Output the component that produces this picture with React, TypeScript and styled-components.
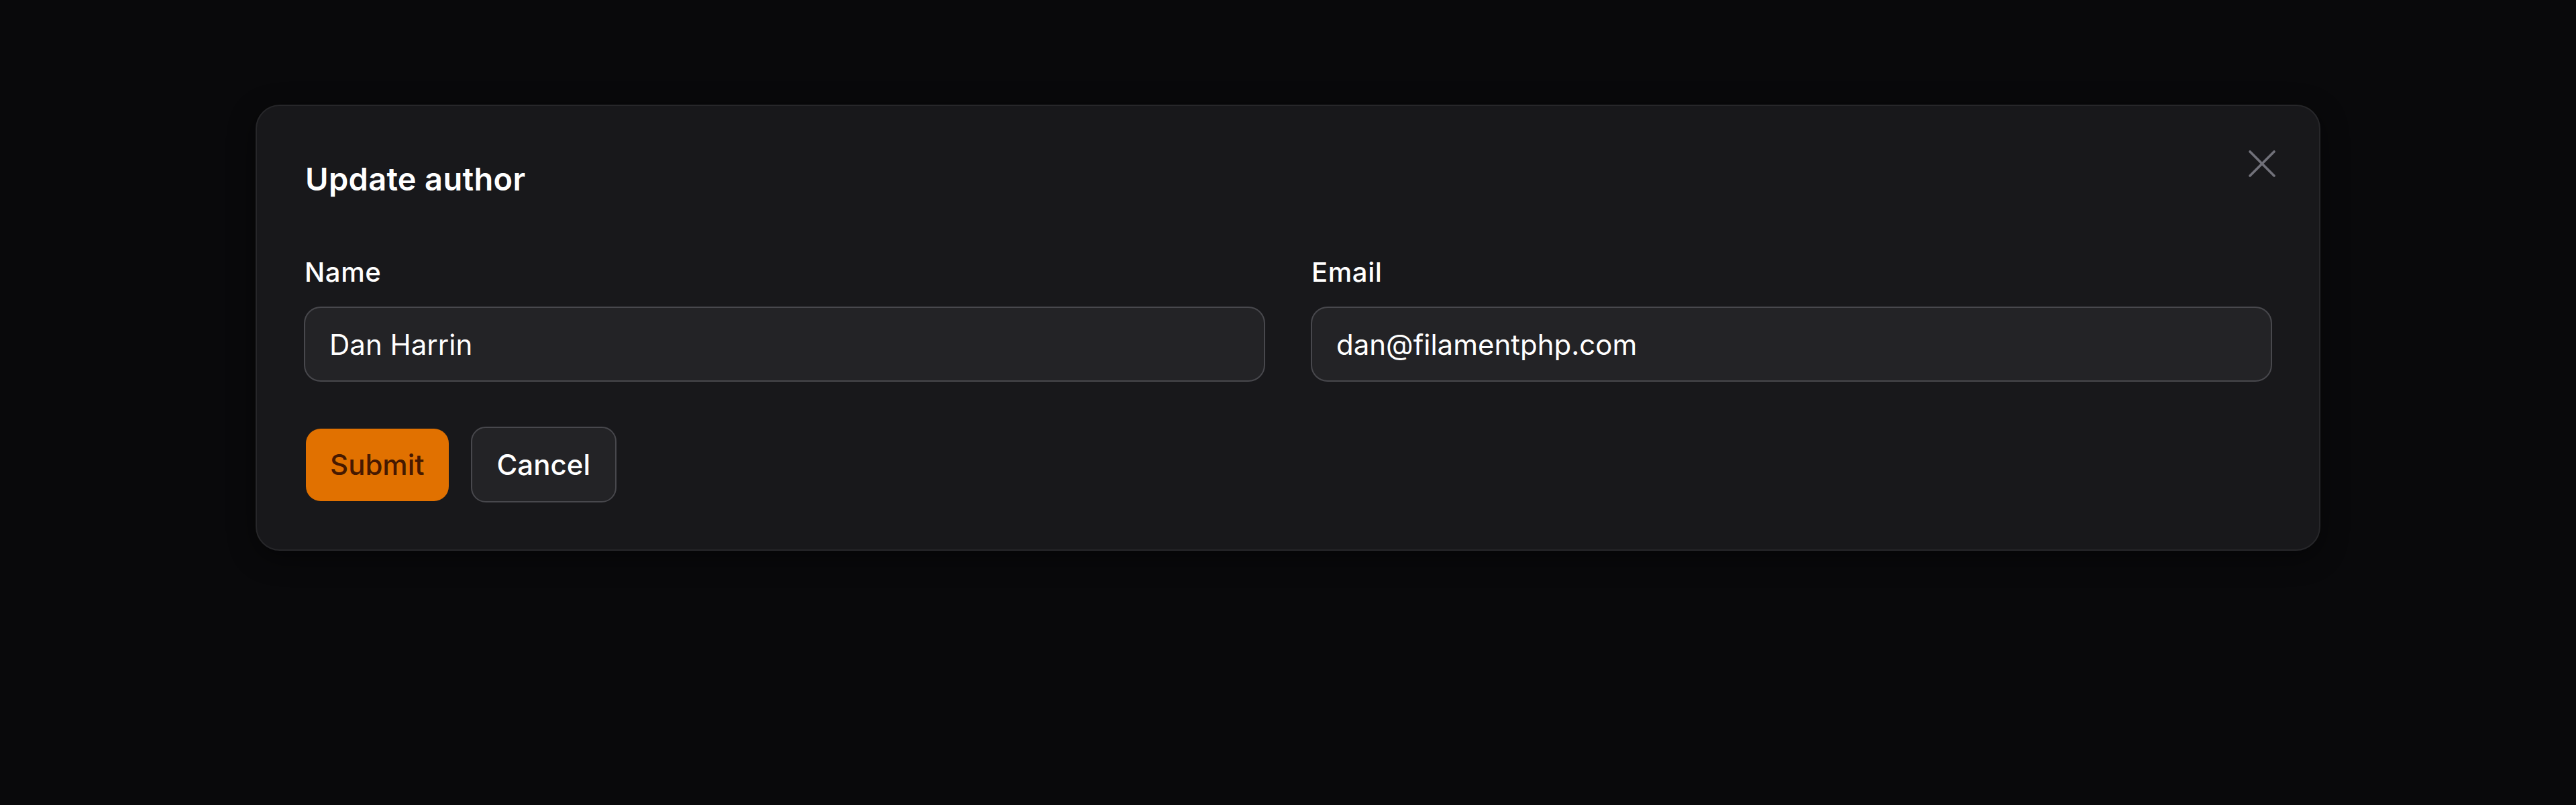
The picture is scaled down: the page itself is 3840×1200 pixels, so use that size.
import React, { useState } from 'react';
import styled, { createGlobalStyle } from 'styled-components';

const GlobalStyle = createGlobalStyle`
  html, body {
    margin: 0;
    padding: 0;
    background: #09090b;
    font-family: Inter, 'Noto Sans', 'Liberation Sans', sans-serif;
    -webkit-font-smoothing: antialiased;
  }
  * {
    box-sizing: border-box;
  }
`;

const App: React.FC = () => {
  const [name, setName] = useState('Dan Harrin');
  const [email, setEmail] = useState('dan@filamentphp.com');

  return (
    <>
      <GlobalStyle />
      <Page>
        <Modal>
          <Header>
            <Title>Update author</Title>
            <CloseButton type="button" aria-label="Close">
              <svg width="40" height="40" viewBox="0 0 40 40" fill="none">
                <path
                  d="M2 2 38 38M38 2 2 38"
                  stroke="#71717a"
                  strokeWidth="3.6"
                  strokeLinecap="round"
                />
              </svg>
            </CloseButton>
          </Header>

          <Fields>
            <Field>
              <Label htmlFor="name">Name</Label>
              <Input id="name" value={name} onChange={(e) => setName(e.target.value)} />
            </Field>
            <Field>
              <Label htmlFor="email">Email</Label>
              <Input id="email" value={email} onChange={(e) => setEmail(e.target.value)} />
            </Field>
          </Fields>

          <Footer>
            <Button type="submit" $variant="primary">Submit</Button>
            <Button type="button" $variant="secondary">Cancel</Button>
          </Footer>
        </Modal>
      </Page>
    </>
  );
};

export default App;

const Page = styled.div`
  min-height: 1200px;
  padding-top: 156px;
`;

const Modal = styled.div`
  width: 3078px;
  margin: 0 auto;
  padding: 72px 70px 70px;
  background: #18181b;
  border: 2px solid #27272a;
  border-radius: 36px;
  box-shadow: 0 10px 40px rgba(0, 0, 0, 0.45);
`;

const Header = styled.div`
  display: flex;
  justify-content: space-between;
  align-items: flex-start;
`;

const Title = styled.h2`
  margin: 0 0 0 2px;
  font-size: 47px;
  line-height: 74px;
  letter-spacing: 0.3px;
  font-weight: 600;
  color: #ffffff;
`;

const CloseButton = styled.button`
  display: flex;
  width: 40px;
  height: 40px;
  margin: -6px -5px 0 0;
  padding: 0;
  border: none;
  background: transparent;
  cursor: pointer;
`;

const Fields = styled.div`
  display: grid;
  grid-template-columns: 1fr 1fr;
  column-gap: 68px;
  margin-top: 72px;
`;

const Field = styled.div`
  display: flex;
  flex-direction: column;
  gap: 21px;
`;

const Label = styled.label`
  padding-left: 1px;
  font-size: 40px;
  line-height: 60px;
  letter-spacing: 0.6px;
  font-weight: 500;
  color: #ffffff;
`;

const Input = styled.input`
  width: 100%;
  height: 112px;
  padding: 0 36px;
  font-family: inherit;
  font-size: 42px;
  color: #ffffff;
  background: #232326;
  border: 2.5px solid #48484d;
  border-radius: 25px;
  outline: none;
`;

const Footer = styled.div`
  display: flex;
  align-items: center;
  gap: 33px;
  margin-top: 67px;
  padding-left: 3px;
`;

const Button = styled.button<{ $variant: 'primary' | 'secondary' }>`
  font-family: inherit;
  font-size: 42px;
  font-weight: 500;
  cursor: pointer;
  border-radius: 22px;
  ${({ $variant }) =>
    $variant === 'primary'
      ? `
    height: 108px;
    padding: 0 36px;
    background: #e17100;
    color: #461901;
    border: none;
  `
      : `
    height: 113px;
    padding: 0 37px;
    background: #232326;
    color: #ffffff;
    border: 2.5px solid #48484d;
  `}
`;
